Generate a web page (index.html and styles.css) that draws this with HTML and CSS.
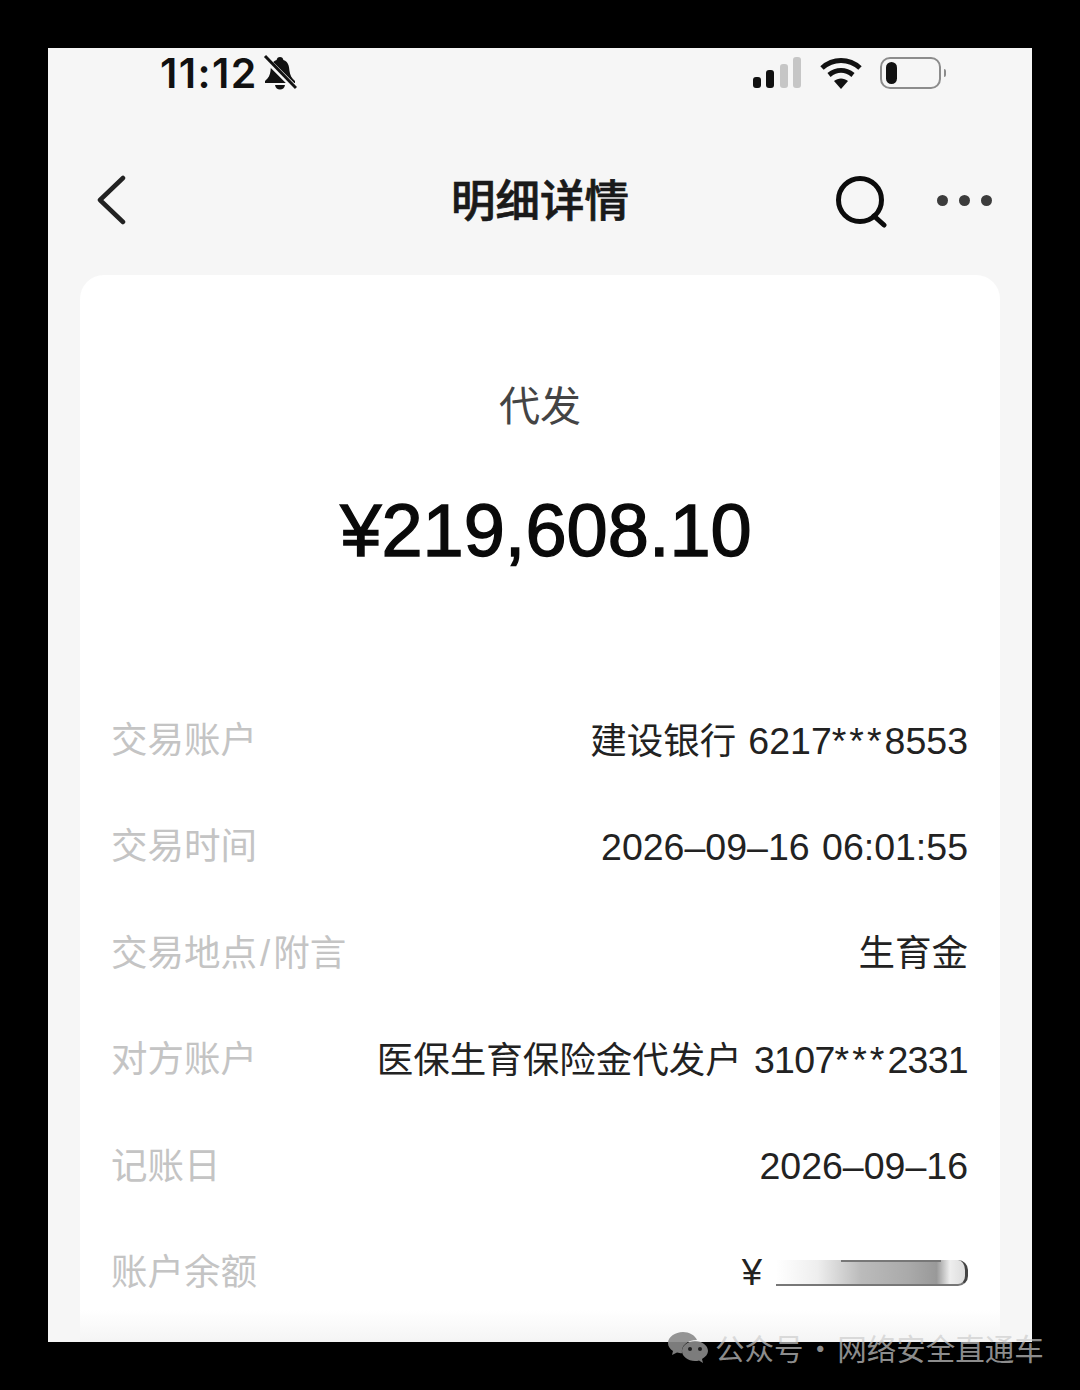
FILE: index.html
```html
<!DOCTYPE html>
<html lang="zh-CN">
<head>
  <meta charset="UTF-8">
  <title>明细详情</title>
  <link rel="stylesheet" href="styles.css">
</head>
<body>
  <div class="screen">
    <!-- Status bar -->
    <div class="status-bar">
      <div class="status-left">
        <span class="clock">11:12</span>
        <svg class="bell" viewBox="0 0 34 38" width="34" height="38">
          <path d="M17 3c-2 0-3 1-3.400 3C8.500 8 8 12 7.500 17c-.4 4-2 7-5.500 10v2h30v-2c-3.500-3-5-6-5.500-10C26 12 25.500 8 20.400 6 20 4 19 3 17 3z" fill="#111"/>
          <path d="M12 31h10c-.5 3-2.500 4.500-5 4.500S12.500 34 12 31z" fill="#111"/>
          <path d="M1 3l32 32" stroke="#f6f6f6" stroke-width="6"/>
          <path d="M2 2l31 32" stroke="#111" stroke-width="3"/>
        </svg>
      </div>
      <div class="status-right">
        <svg class="signal" viewBox="0 0 48 32" width="48" height="32">
          <rect x="0" y="20" width="8" height="11" rx="3" fill="#111"/>
          <rect x="13" y="13" width="8" height="18" rx="3" fill="#111"/>
          <rect x="27" y="7" width="8" height="24" rx="3" fill="#c6c6c6"/>
          <rect x="40" y="0" width="8" height="31" rx="3" fill="#c6c6c6"/>
        </svg>
        <svg class="wifi" viewBox="0 0 42 32" width="42" height="32">
          <path d="M2 11C13 1 29 1 40 11" fill="none" stroke="#111" stroke-width="5"/>
          <path d="M9 18c7.500-6 16.500-6 24 0" fill="none" stroke="#111" stroke-width="5"/>
          <path d="M14 24c4-3.500 10-3.500 14 0l-7 8z" fill="#111"/>
        </svg>
        <div class="battery">
          <div class="battery-level"></div>
        </div>
        <div class="battery-cap"></div>
      </div>
    </div>

    <!-- Nav bar -->
    <div class="nav-bar">
      <svg class="back" viewBox="0 0 30 50" width="30" height="50">
        <path d="M27 3L4 25l23 22" fill="none" stroke="#222" stroke-width="4.500" stroke-linecap="round" stroke-linejoin="round"/>
      </svg>
      <h1 class="nav-title">明细详情</h1>
      <div class="nav-actions">
        <svg class="search" viewBox="0 0 52 52" width="52" height="52">
          <circle cx="25" cy="24" r="21.500" fill="none" stroke="#0c0c0c" stroke-width="5"/>
          <path d="M39 40l10 9" stroke="#0c0c0c" stroke-width="5" stroke-linecap="round"/>
        </svg>
        <div class="dots"><span></span><span></span><span></span></div>
      </div>
    </div>

    <!-- Detail card -->
    <div class="card">
      <div class="card-type">代发</div>
      <div class="card-amount">¥219,608.10</div>
      <div class="rows">
        <div class="row"><span class="row-label">交易账户</span><span class="row-value">建设银行 <span class="num">6217<span class="stars">***</span>8553</span></span></div>
        <div class="row"><span class="row-label">交易时间</span><span class="row-value"><span class="num">2026–09–16 06:01:55</span></span></div>
        <div class="row"><span class="row-label">交易地点<span class="slash">/</span>附言</span><span class="row-value">生育金</span></div>
        <div class="row"><span class="row-label">对方账户</span><span class="row-value">医保生育保险金代发户 <span class="num tight">3107<span class="stars">***</span>2331</span></span></div>
        <div class="row"><span class="row-label">记账日</span><span class="row-value"><span class="num">2026–09–16</span></span></div>
        <div class="row"><span class="row-label">账户余额</span><span class="row-value balance">¥<span class="smudge"></span></span></div>
      </div>
    </div>
  </div>

  <!-- Watermark -->
  <div class="watermark">
    <svg class="wechat" viewBox="0 0 42 32" width="42" height="32">
      <path d="M16 1C8 1 1 6 1 12c0 3.500 2 6 5 8l-1 4 5-2.500c2 .5 3 .7 5 .7C14 15 20 9 30 9 28 4 22 1 16 1z" fill="#8a8a8a"/>
      <path d="M28 10c-7 0-13 4.500-13 10s6 10 13 10c1.500 0 3-.2 4-.6l4 2.600-1-4c3.500-2 6-5 6-8 0-5.500-6-10-13-10z" fill="#8a8a8a"/>
      <circle cx="23" cy="18" r="2" fill="#222"/>
      <circle cx="33" cy="18" r="2" fill="#222"/>
    </svg>
    <span class="watermark-text">公众号 · 网络安全直通车</span>
  </div>
</body>
</html>
```

FILE: styles.css
```css
html, body {
  margin: 0;
  height: 1390px;
  overflow: hidden;
  background: #000;
}
body {
  position: relative;
  font-family: "Liberation Sans", "Noto Sans CJK SC", sans-serif;
}
.screen {
  box-sizing: border-box;
  width: 984px;
  height: 1294px;
  margin: 48px 48px 0;
  padding: 0 32px;
  background: #f6f6f6;
  overflow: hidden;
}

/* status bar */
.status-bar {
  display: flex;
  justify-content: space-between;
  align-items: center;
  height: 50px;
  padding: 0 54px 0 80px;
}
.status-left {
  display: flex;
  align-items: center;
  gap: 5px;
}
.clock {
  font-family: Inter, sans-serif;
  font-size: 41px;
  font-weight: 600;
  line-height: 50px;
  color: #111;
  letter-spacing: 1.400px;
}
.status-right {
  display: flex;
  align-items: center;
}
.wifi {
  margin-left: 19px;
}
.battery {
  box-sizing: border-box;
  width: 61px;
  height: 32px;
  margin-left: 18px;
  padding: 3px 4px;
  border: 2px solid #8c8c8c;
  border-radius: 10px;
}
.battery-level {
  width: 11px;
  height: 100%;
  background: #111;
  border-radius: 6px;
}
.battery-cap {
  width: 2px;
  height: 8px;
  margin-left: 3px;
  background: #8c8c8c;
  border-radius: 0 2px 2px 0;
}

/* nav bar */
.nav-bar {
  display: flex;
  align-items: center;
  justify-content: space-between;
  position: relative;
  height: 104px;
  margin-top: 50px;
  padding: 0 8px 0 16px;
}
.nav-title {
  position: absolute;
  left: 0;
  right: 0;
  top: 0;
  margin: 0;
  text-align: center;
  font-size: 44.500px;
  font-weight: 500;
  line-height: 108px;
  -webkit-text-stroke: 0.7px #1a1a1a;
  color: #1a1a1a;
}
.nav-actions {
  display: flex;
  align-items: center;
  gap: 50px;
}
.search {
  margin-top: 3px;
}
.dots {
  display: flex;
  gap: 11px;
}
.dots span {
  width: 11px;
  height: 11px;
  border-radius: 50%;
  background: #3c3c3c;
}

/* card */
.card {
  box-sizing: border-box;
  height: 1068px;
  margin-top: 23px;
  padding: 105px 32px 0;
  background: linear-gradient(#fff 1035px, #f4f4f4 100%);
  border-radius: 24px 24px 0 0;
}
.card-type {
  text-align: center;
  font-size: 41px;
  line-height: 54px;
  color: #444;
}
.card-amount {
  margin-top: 55px;
  padding-left: 12px;
  text-align: center;
  font-size: 74px;
  line-height: 84px;
  -webkit-text-stroke: 1.400px #0a0a0a;
  color: #0a0a0a;
}
.rows {
  display: flex;
  flex-direction: column;
  gap: 56.400px;
  margin-top: 143px;
}
.row {
  display: flex;
  justify-content: space-between;
  align-items: center;
  height: 50px;
  line-height: 50px;
  font-size: 36.500px;
}
.row-label {
  margin-left: -1px;
  color: #c4c4c4;
}
.slash {
  margin: 0 3px;
}
.row-value {
  color: #222;
  word-spacing: 2px;
}
.num {
  font-size: 37.500px;
}
.tight {
  letter-spacing: -0.700px;
}
.stars {
  letter-spacing: 3px;
}
.balance {
  display: flex;
  align-items: center;
  gap: 14px;
}
.smudge {
  box-sizing: border-box;
  width: 192px;
  height: 26px;
  border-bottom: 2px solid #777;
  border-right: 3px solid #444;
  border-radius: 0 10px 10px 0;
  filter: blur(0.5px);
  background:
    linear-gradient(#777 0 2px, transparent 2px) 65px 0 / 100px 100% no-repeat,
    linear-gradient(90deg, #fff 0%, #eee 22%, #bbb 45%, #aaa 70%, #999 85%, #eee 92%, #ddd 100%);
}

/* watermark over the lower edge */
.watermark {
  position: absolute;
  left: 667px;
  top: 1331px;
  display: flex;
  align-items: center;
  gap: 6px;
}
.wechat {
  opacity: 0.9;
}
.watermark-text {
  font-family: "Noto Sans CJK SC", sans-serif;
  font-size: 29.500px;
  line-height: 32px;
  word-spacing: -4.500px;
  color: rgba(205, 205, 205, 0.7);
}
```
